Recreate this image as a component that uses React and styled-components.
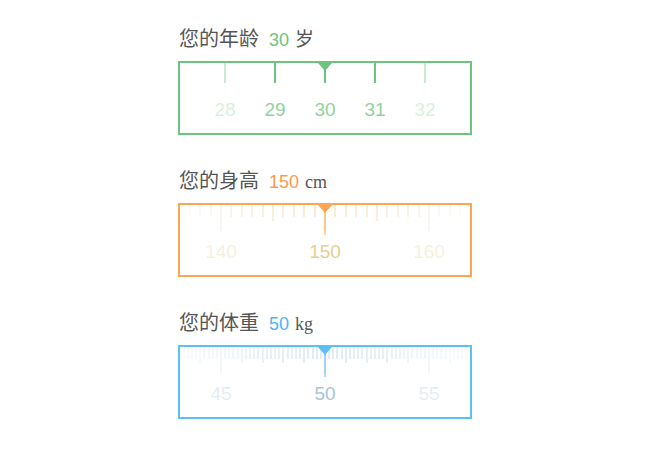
import React from "react";
import styled, { createGlobalStyle } from "styled-components";

const Global = createGlobalStyle`
  html, body { margin: 0; padding: 0; background: #fff; }
  body { font-family: "Liberation Sans", Arial, sans-serif; }
`;

const Page = styled.div`
  width: 650px;
  height: 460px;
  display: flex;
  flex-direction: column;
  align-items: center;
  padding-top: 26px;
  box-sizing: border-box;
`;

const Section = styled.section`
  width: 294px;
  display: flex;
  flex-direction: column;
  gap: 11px;
  margin-bottom: 33px;
`;

const Title = styled.div`
  height: 24px;
  line-height: 24px;
  font-size: 20px;
  color: #555;
  font-family: "Noto Sans CJK SC", "Liberation Sans", sans-serif;
  padding-left: 1px;
  white-space: nowrap;
`;

const Num = styled.span`
  font-family: "Liberation Sans", Arial, sans-serif;
  font-size: 18px;
  color: ${(p) => p.$color};
  margin: 0 6px 0 10px;
`;

const Unit = styled.span`
  font-family: ${(p) => (p.$latin ? '"Liberation Serif", serif' : '"Noto Sans CJK SC", sans-serif')};
  font-size: ${(p) => (p.$latin ? "18px" : "19px")};
  color: #555;
`;

const Box = styled.div`
  width: 290px;
  height: 70px;
  border: 2px solid ${(p) => p.$color};
  position: relative;
  overflow: hidden;
`;

const W = 290;
const C = 145;

function GreenRuler() {
  const color = "#6cc47e";
  const vals = [28, 29, 30, 31, 32];
  return (
    <svg width={W} height={70}>
      {vals.map((v) => {
        const x = C + (v - 30) * 50;
        const far = Math.abs(v - 30) === 2;
        return (
          <g key={v}>
            <rect x={x - 1} y={0} width={2} height={20} fill={color} opacity={far ? 0.35 : 1} />
            <text
              x={x}
              y={53}
              textAnchor="middle"
              fontSize="19"
              fontFamily="Liberation Sans, Arial, sans-serif"
              fill={color}
              opacity={far ? 0.25 : 0.75}
            >
              {v}
            </text>
          </g>
        );
      })}
      <polygon points={`${C - 7},0 ${C + 7},0 ${C},8`} fill={color} />
    </svg>
  );
}

function FineRuler({ center, step, unitPx, major, mid, tickColor, labelColor, markColor, range }) {
  const ticks = [];
  const n = Math.ceil(range / step);
  for (let i = -n; i <= n; i++) {
    const v = +(center + i * step).toFixed(2);
    const x = C + (v - center) * unitPx;
    if (x < -2 || x > W + 2) continue;
    const d = Math.abs(x - C) / C;
    const op = Math.max(0.08, 0.9 - d * 0.75);
    const isMajor = Math.abs(v / major - Math.round(v / major)) < 1e-6;
    const isMid = Math.abs(v / mid - Math.round(v / mid)) < 1e-6;
    const h = isMajor ? 26 : isMid ? 16 : 12;
    ticks.push(
      <rect key={"t" + i} x={Math.round(x) - 0.5} y={0} width={1} height={h} fill={tickColor} opacity={op} />
    );
  }
  const labels = [center - major, center, center + major].map((v) => {
    const x = C + (v - center) * unitPx;
    const o = v === center ? 1 : 0.3;
    return (
      <text
        key={"l" + v}
        x={x}
        y={53}
        textAnchor="middle"
        fontSize="19"
        fontFamily="Liberation Sans, Arial, sans-serif"
        fill={labelColor}
        opacity={o}
      >
        {v}
      </text>
    );
  });
  return (
    <svg width={W} height={70}>
      {ticks}
      {labels}
      <rect x={C - 0.5} y={0} width={1} height={30} fill={markColor} />
      <polygon points={`${C - 7},0 ${C + 7},0 ${C},8`} fill={markColor} />
    </svg>
  );
}

export default function App() {
  return (
    <>
      <Global />
      <Page>
        <Section>
          <Title>
            您的年龄<Num $color="#6cc47e">30</Num>
            <Unit>岁</Unit>
          </Title>
          <Box $color="#6cc47e">
            <GreenRuler />
          </Box>
        </Section>
        <Section>
          <Title>
            您的身高<Num $color="#ff9a4d">150</Num>
            <Unit $latin>cm</Unit>
          </Title>
          <Box $color="#ffa44f">
            <FineRuler
              center={150}
              step={1}
              unitPx={10.4}
              major={10}
              mid={5}
              tickColor="#e8cf9a"
              labelColor="#e4cf90"
              markColor="#ffa44f"
              range={16}
            />
          </Box>
        </Section>
        <Section>
          <Title>
            您的体重<Num $color="#4db6f5">50</Num>
            <Unit $latin>kg</Unit>
          </Title>
          <Box $color="#5cc0f7">
            <FineRuler
              center={50}
              step={0.2}
              unitPx={20.8}
              major={5}
              mid={1}
              tickColor="#b9d2e4"
              labelColor="#a9c3d8"
              markColor="#5cc0f7"
              range={8}
            />
          </Box>
        </Section>
      </Page>
    </>
  );
}
